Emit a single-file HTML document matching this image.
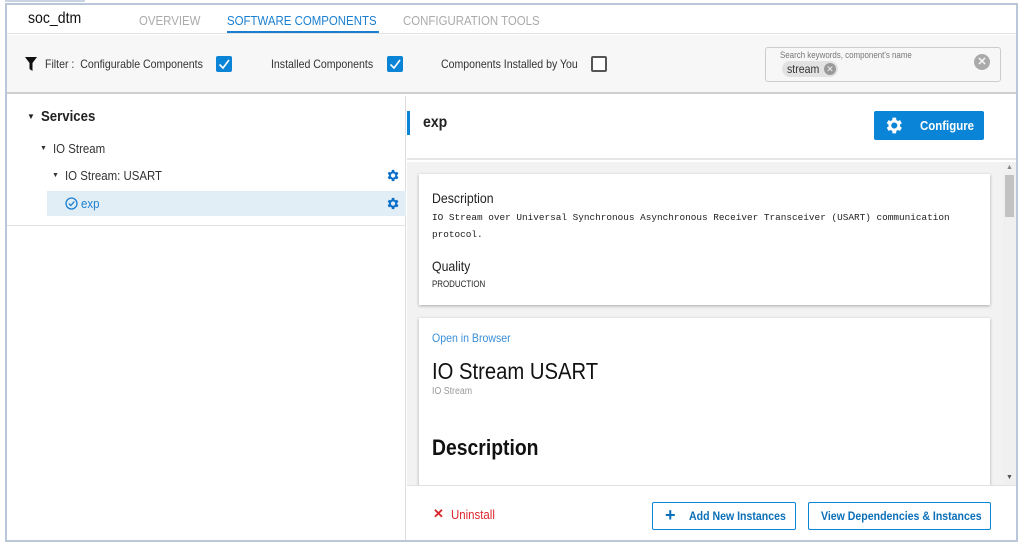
<!DOCTYPE html>
<html><head><style>
*{box-sizing:border-box;margin:0;padding:0}
body{width:1020px;height:543px;background:#fff;font-family:"Liberation Sans",sans-serif;position:relative;overflow:hidden;color:#222}
.a{position:absolute;white-space:nowrap}
.c{transform:scaleX(.88);transform-origin:left center}
.frame{left:5px;top:3px;width:1013px;height:539px;border:2px solid #b9c7d8}
.cb{width:16px;height:16px;border-radius:2px}
.on{background:#0a84d6}
.off{border:2px solid #555;background:#fff}
</style></head><body>
<svg width="0" height="0" style="position:absolute"><defs><path id="g" d="M19.4 13a7.5 7.5 0 0 0 0-2l2.1-1.6-2-3.5-2.5 1a7.3 7.3 0 0 0-1.7-1L14.9 3h-4l-.4 2.9a7.3 7.3 0 0 0-1.7 1l-2.5-1-2 3.5L6.4 11a7.5 7.5 0 0 0 0 2l-2.1 1.6 2 3.5 2.5-1a7.3 7.3 0 0 0 1.7 1l.4 2.9h4l.4-2.9a7.3 7.3 0 0 0 1.7-1l2.5 1 2-3.5zM12.9 15.5a3.5 3.5 0 1 1 0-7 3.5 3.5 0 0 1 0 7z"/></defs></svg>
<div class="a" style="left:5px;top:0;width:80px;height:2px;background:#c9d4e2"></div>
<div class="a" style="left:7px;top:5px;width:1009px;height:29px;background:#fff;border-bottom:1px solid #e2e2e2"></div>
<div class="a c" style="left:28px;top:10px;font-size:16px;color:#111">soc_dtm</div>
<div class="a c" style="left:139px;top:13px;font-size:13px;color:#aaa">OVERVIEW</div>
<div class="a c" style="left:227px;top:13px;font-size:13px;color:#1a7fd0">SOFTWARE COMPONENTS</div>
<div class="a" style="left:227px;top:31px;width:152px;height:2px;background:#1a7fd0"></div>
<div class="a c" style="left:403px;top:13px;font-size:13px;color:#aaa">CONFIGURATION TOOLS</div>
<div class="a" style="left:7px;top:35px;width:1009px;height:59px;background:#f7f7f7;border-bottom:2px solid #cfcfcf"></div>
<svg class="a" style="left:25px;top:57px" width="12" height="14" viewBox="0 0 12 14"><path d="M0 0H12L7.5 6V14L4.5 12V6Z" fill="#111"/></svg>
<div class="a c" style="left:45px;top:57px;font-size:12px;color:#333">Filter :&nbsp; Configurable Components</div>
<div class="a cb on" style="left:216px;top:56px"><svg width="16" height="16"><path d="M3.5 8.5L7 12L13 4" stroke="#fff" stroke-width="1.6" fill="none"/></svg></div>
<div class="a c" style="left:271px;top:57px;font-size:12px;color:#333">Installed Components</div>
<div class="a cb on" style="left:387px;top:56px"><svg width="16" height="16"><path d="M3.5 8.5L7 12L13 4" stroke="#fff" stroke-width="1.6" fill="none"/></svg></div>
<div class="a c" style="left:441px;top:57px;font-size:12px;color:#333">Components Installed by You</div>
<div class="a cb off" style="left:591px;top:56px"></div>
<div class="a" style="left:765px;top:47px;width:236px;height:35px;border:1px solid #ccc;border-radius:3px;background:#f7f7f7"></div>
<div class="a c" style="left:780px;top:50px;font-size:9px;color:#777">Search keywords, component's name</div>
<div class="a" style="left:782px;top:61px;height:16px;width:56px;border-radius:8px;background:#e2e2e2"></div>
<div class="a c" style="left:787px;top:62px;font-size:12px;color:#333">stream</div>
<div class="a" style="left:824px;top:63px;width:12px;height:12px;border-radius:50%;background:#999;color:#eee;font-size:9px;text-align:center;line-height:12px">✕</div>
<div class="a" style="left:974px;top:54px;width:16px;height:16px;border-radius:50%;background:#aaa;color:#f7f7f7;font-size:11px;font-weight:bold;text-align:center;line-height:16px">✕</div>
<div class="a" style="left:7px;top:96px;width:399px;height:444px;background:#fff;border-right:1px solid #ddd"></div>
<div class="a" style="left:27px;top:112px;font-size:8px;color:#222">▼</div>
<div class="a c" style="left:41px;top:108px;font-size:15px;font-weight:bold;color:#222">Services</div>
<div class="a" style="left:40px;top:145px;font-size:7px;color:#333">▼</div>
<div class="a c" style="left:53px;top:141px;font-size:13px;color:#333">IO Stream</div>
<div class="a" style="left:52px;top:172px;font-size:7px;color:#333">▼</div>
<div class="a c" style="left:65px;top:168px;font-size:13px;color:#333">IO Stream: USART</div>
<svg class="a" style="left:385px;top:168px" width="15" height="15" viewBox="0 0 24 24"><use href="#g" fill="#0a6fc9"/></svg>
<div class="a" style="left:47px;top:191px;width:359px;height:25px;background:#e1eef6"></div>
<svg class="a" style="left:65px;top:197px" width="13" height="13"><circle cx="6.5" cy="6.5" r="5.5" stroke="#1a7fd0" stroke-width="1.3" fill="none"/><path d="M3.8 6.6L5.8 8.6L9.3 4.6" stroke="#1a7fd0" stroke-width="1.3" fill="none"/></svg>
<div class="a c" style="left:81px;top:196px;font-size:13px;color:#1a7fd0">exp</div>
<svg class="a" style="left:385px;top:196px" width="15" height="15" viewBox="0 0 24 24"><use href="#g" fill="#0a6fc9"/></svg>
<div class="a" style="left:7px;top:225px;width:399px;height:1px;background:#e2e2e2"></div>
<div class="a" style="left:407px;top:96px;width:609px;height:64px;background:#fff;border-bottom:2px solid #e6e6e6"></div>
<div class="a" style="left:407px;top:111px;width:3px;height:24px;background:#0a84d6"></div>
<div class="a c" style="left:423px;top:114px;font-size:16px;font-weight:bold;color:#222">exp</div>
<div class="a" style="left:874px;top:111px;width:110px;height:29px;background:#0a84d6;border-radius:2px"></div>
<svg class="a" style="left:883px;top:115px" width="21" height="21" viewBox="0 0 24 24"><use href="#g" fill="#fff"/></svg>
<div class="a c" style="left:920px;top:118px;font-size:13px;font-weight:bold;color:#fff">Configure</div>
<div class="a" style="left:407px;top:162px;width:609px;height:324px;background:#f2f2f2"></div>
<div class="a" style="left:1003px;top:162px;width:13px;height:324px;background:#f0f0f0"></div>
<div class="a" style="left:1005px;top:175px;width:9px;height:42px;background:#c2c2c2"></div>
<div class="a" style="left:1006px;top:164px;font-size:7px;color:#888">▲</div>
<div class="a" style="left:1006px;top:474px;font-size:7px;color:#555">▼</div>
<div class="a" style="left:419px;top:174px;width:571px;height:131px;background:#fff;box-shadow:0 1px 3px rgba(0,0,0,.3)"></div>
<div class="a c" style="left:432px;top:190px;font-size:14px;color:#222">Description</div>
<div class="a" style="left:432px;top:209px;font-family:'Liberation Mono',monospace;font-size:9.4px;line-height:17px;color:#222;width:540px;white-space:normal">IO Stream over Universal Synchronous Asynchronous Receiver Transceiver (USART) communication protocol.</div>
<div class="a c" style="left:432px;top:258px;font-size:14px;color:#222">Quality</div>
<div class="a c" style="left:432px;top:279px;font-size:9px;color:#222">PRODUCTION</div>
<div class="a" style="left:419px;top:318px;width:571px;height:170px;background:#fff;box-shadow:0 1px 3px rgba(0,0,0,.3)"></div>
<div class="a c" style="left:432px;top:331px;font-size:12px;color:#3a8fd8">Open in Browser</div>
<div class="a c" style="left:432px;top:358px;font-size:23px;color:#111">IO Stream USART</div>
<div class="a c" style="left:432px;top:386px;font-size:10px;color:#999">IO Stream</div>
<div class="a c" style="left:432px;top:435px;font-size:22px;font-weight:bold;color:#111">Description</div>
<div class="a" style="left:407px;top:485px;width:609px;height:55px;background:#fff;border-top:1px solid #e2e2e2"></div>
<div class="a" style="left:433px;top:506px;font-size:13px;color:#d9262c;font-weight:bold">✕</div>
<div class="a c" style="left:451px;top:507px;font-size:13px;color:#d9262c">Uninstall</div>
<div class="a" style="left:652px;top:502px;width:144px;height:28px;border:1px solid #0a84d6;border-radius:2px"></div>
<div class="a" style="left:665px;top:505px;font-size:18px;color:#0a6fb8;font-weight:bold">+</div>
<div class="a c" style="left:689px;top:509px;font-size:12px;font-weight:bold;color:#0a6fb8">Add New Instances</div>
<div class="a" style="left:808px;top:502px;width:183px;height:28px;border:1px solid #0a84d6;border-radius:2px"></div>
<div class="a c" style="left:821px;top:509px;font-size:12px;font-weight:bold;color:#0a6fb8">View Dependencies &amp; Instances</div>
<div class="a frame"></div>
</body></html>
